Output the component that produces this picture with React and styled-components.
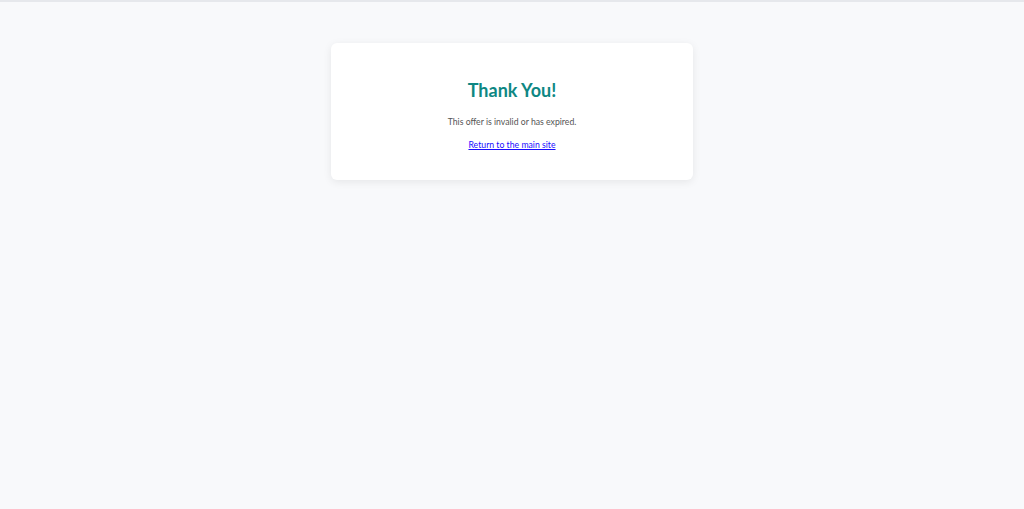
import styled, { createGlobalStyle } from "styled-components";

const GlobalStyle = createGlobalStyle`
  html, body {
    margin: 0;
    padding: 0;
    background: #f8f9fb;
    font-family: "Lato", "Open Sans", sans-serif;
  }
`;

const Page = styled.main`
  min-height: 509px;
  box-sizing: border-box;
  border-top: 2px solid #e6e8ec;
  display: flex;
  justify-content: center;
  align-items: flex-start;
  padding-top: 41px;
`;

const Card = styled.section`
  width: 362px;
  box-sizing: border-box;
  background: #ffffff;
  border-radius: 6px;
  box-shadow: 0 2px 8px rgba(0, 0, 0, 0.08);
  padding: 35px 20px 29px;
  text-align: center;
`;

const Title = styled.h1`
  margin: 0 0 14px;
  font-size: 18px;
  line-height: 24px;
  font-weight: 700;
  color: #0e8783;
`;

const Message = styled.p`
  margin: 0 0 11px;
  font-size: 8.7px;
  line-height: 12px;
  color: #555555;
`;

const LinkRow = styled.p`
  margin: 0;
  font-size: 8.7px;
  line-height: 12px;
`;

const HomeLink = styled.a`
  color: #1a0dff;
`;

export default function App() {
  return (
    <>
      <GlobalStyle />
      <Page>
        <Card>
          <Title>Thank You!</Title>
          <Message>This offer is invalid or has expired.</Message>
          <LinkRow>
            <HomeLink href="#">Return to the main site</HomeLink>
          </LinkRow>
        </Card>
      </Page>
    </>
  );
}
